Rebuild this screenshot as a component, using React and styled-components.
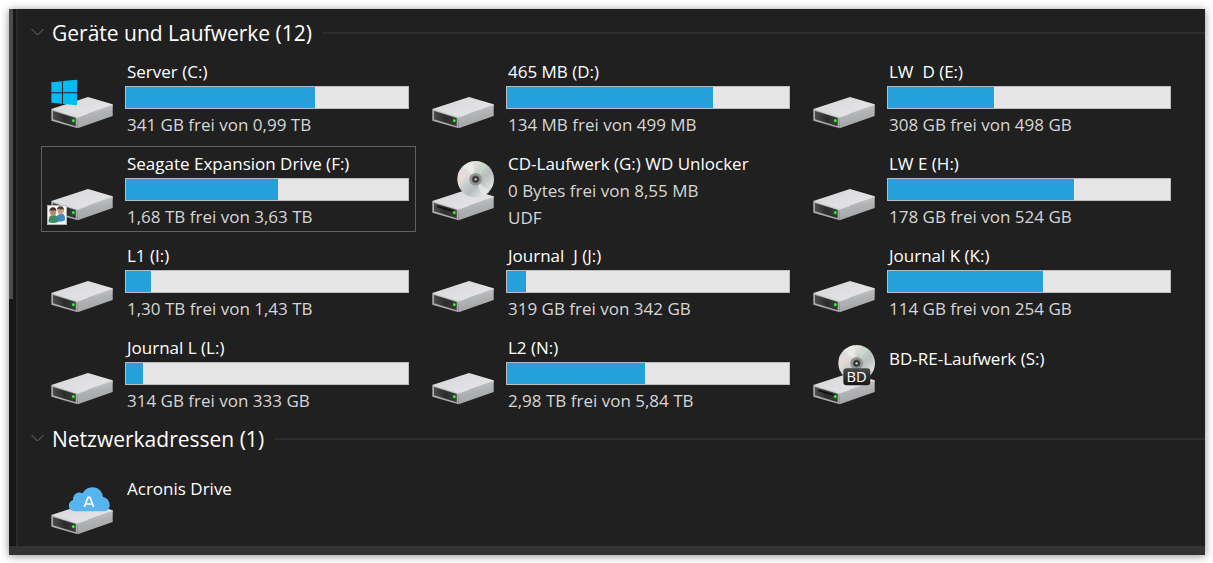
import React, { useState } from "react";
import styled, { createGlobalStyle } from "styled-components";

const GlobalStyle = createGlobalStyle`
  *, *::before, *::after { box-sizing: border-box; }
  body {
    margin: 0;
    background: #fff;
    color: #fff;
    font-family: "Open Sans", "Noto Sans", sans-serif;
    font-size: 17px;
    line-height: 27px;
  }
`;

const Page = styled.div`
  display: flex;
  min-height: 100vh;
  padding: 9px 8px 8px 9px;
`;

const Window = styled.main`
  flex: 1;
  display: flex;
  flex-direction: column;
  background: #202020;
  box-shadow: 0 1px 8px rgba(0, 0, 0, 0.45);
`;

const Panes = styled.div`
  flex: 1;
  display: flex;
`;

const ScrollTrack = styled.div`
  width: 9px;
  background: #171717;
  border-right: 2px solid #2a2a2a;
`;

const ScrollThumb = styled.div`
  width: 4px;
  height: 54%;
  background: #4d4d4d;
`;

const Content = styled.div`
  flex: 1;
  min-width: 0;
  padding-top: 1px;
`;

const StatusBar = styled.footer`
  height: 9px;
  background: #333;
`;

const GroupHeader = styled.h2`
  display: flex;
  align-items: center;
  gap: 11px;
  height: 44px;
  margin: 0;
  padding: 2px 0 0 13px;
  font-weight: 400;

  &::after {
    content: "";
    flex: 1;
    height: 2px;
    background: #2d2d2d;
  }
`;

const GroupToggle = styled.button`
  display: flex;
  align-items: center;
  gap: 8px;
  padding: 0;
  border: 0;
  background: none;
  color: inherit;
  font: inherit;
  font-size: 21px;
  line-height: 30px;
  white-space: nowrap;
`;

const Chevron = styled.svg`
  width: 13px;
  height: 11px;
  fill: none;
  stroke: #6c6c6c;
  transform: ${(p) => (p.$open ? "none" : "rotate(-90deg)")};
`;

const Grid = styled.ul`
  display: grid;
  grid-template-columns: repeat(auto-fill, 375px);
  gap: 6px;
  margin: 0;
  padding: 0 0 0 23px;
  list-style: none;
`;

const Tile = styled.li`
  display: flex;
  gap: 8px;
  height: 86px;
  padding: 0 6px 0 3px;
  border: 1px solid ${(p) => (p.$focused ? "#606060" : "transparent")};
`;

const IconBox = styled.svg`
  flex: none;
  width: 72px;
  height: 80px;
  margin-top: -1px;
`;

const Info = styled.div`
  flex: 1;
  min-width: 0;
  padding-top: ${(p) => (p.$nameOnly ? "14px" : "3px")};
  white-space: pre;
`;

const Name = styled.div`
  padding-left: 2px;
`;

const Detail = styled.div`
  padding-left: 2px;
  color: #d6d6d6;
`;

const Meter = styled.div`
  height: 23px;
  margin: 1px 0 2px;
  border: 1px solid #bcbcbc;
  background: #e6e6e6;
`;

const MeterFill = styled.div`
  height: 100%;
  background: #26a0da;
`;

function DriveIcon({ kind }) {
  const disc = kind === "cd" || kind === "bd";
  return (
    <IconBox viewBox="0 0 216 240" aria-hidden="true">
      <defs>
        <linearGradient id="top" x1="0" y1="0" x2="1" y2="1">
          <stop offset="0" stopColor="#d6d6d9" />
          <stop offset="1" stopColor="#e9e9ec" />
        </linearGradient>
        <linearGradient id="side" x1="0" y1="0" x2="0.3" y2="1">
          <stop offset="0" stopColor="#d2d3d5" />
          <stop offset="0.5" stopColor="#b2b3b5" />
          <stop offset="1" stopColor="#a2a3a5" />
        </linearGradient>
        <linearGradient id="face" x1="0" y1="0" x2="1" y2="0">
          <stop offset="0" stopColor="#4c4c4c" />
          <stop offset="0.5" stopColor="#2c2c2c" />
          <stop offset="1" stopColor="#3a3a3a" />
        </linearGradient>
        <linearGradient id="disc" x1="0" y1="0" x2="1" y2="1">
          <stop offset="0" stopColor="#d5dcda" />
          <stop offset="0.3" stopColor="#e4ded9" />
          <stop offset="0.45" stopColor="#c5cdcb" />
          <stop offset="0.6" stopColor="#b8bdbd" />
          <stop offset="0.8" stopColor="#dcdfdf" />
          <stop offset="1" stopColor="#aeb5b3" />
        </linearGradient>
        <linearGradient id="badge" x1="0" y1="0" x2="0" y2="1">
          <stop offset="0" stopColor="#4a4a4a" />
          <stop offset="1" stopColor="#161616" />
        </linearGradient>
      </defs>

      <path d="M19 165 L129 129 L203 151 L203 157 L99 195 Z" fill="url(#top)" />
      <path d="M96 190 L203 152 V186 L98 223 Z" fill="url(#side)" />
      <path d="M19 165 L97 189 L98 223 L19 200 Z" fill="#a9aaac" />
      <path d="M24 171 L92 192 V217 L24 196 Z" fill="url(#face)" />
      <path d="M20 166 L97 190 L128 179" fill="none" stroke="#e8e8ea" strokeWidth="2" />
      {disc && <path d="M33 181 L80 195" stroke="#0c0c0c" strokeWidth="4" />}
      <circle cx="85" cy="200" r="6" fill="#176b17" />
      <circle cx="85" cy="200" r="4" fill="#3df03a" />

      {disc && (
        <g>
          <circle cx="149" cy="100" r="55" fill="url(#disc)" />
          <path d="M149 100 L112 60 A55 55 0 0 1 140 46 Z" fill="#eef1f0" opacity="0.7" />
          <path d="M149 100 L172 51 A55 55 0 0 1 184 58 Z" fill="#b9e6c4" opacity="0.7" />
          <path d="M149 100 L95 86 A55 55 0 0 1 101 73 Z" fill="#ecd3e6" opacity="0.7" />
          <path d="M149 100 L190 137 A55 55 0 0 1 168 151 Z" fill="#eceeee" opacity="0.6" />
          <circle cx="149" cy="100" r="19" fill="#8e9392" />
          <circle cx="149" cy="100" r="14" fill="#6d7170" stroke="#a9adac" strokeWidth="2" />
          <circle cx="149" cy="100" r="9" fill="#2b2b2b" stroke="#4a4a4a" strokeWidth="2" />
          <circle cx="149" cy="100" r="4" fill="#b9bcbb" />
        </g>
      )}
      {kind === "bd" && (
        <g>
          <rect x="109" y="115" width="81" height="51" rx="10" fill="url(#badge)" />
          <text x="149" y="156" textAnchor="middle" fontSize="44" fill="#fff">BD</text>
        </g>
      )}
      {kind === "windows" && (
        <path
          d="M19 85 L51 82 V115 H19 Z M54 81 L96 77 V115 H54 Z M19 118 H51 V149 L19 146 Z M54 118 H96 V154 L54 150 Z"
          fill="#00bcf2"
        />
      )}
      {kind === "shared" && (
        <g>
          <rect x="7" y="178" width="58" height="58" fill="#f4f4f4" stroke="#b5b5b5" strokeWidth="2" />
          <path d="M34 226 Q32 207 44 204 H54 Q61 207 60 223 Q50 229 34 226 Z" fill="#3f8ac6" />
          <ellipse cx="47" cy="194" rx="9" ry="11" fill="#c99f80" />
          <path d="M36 193 Q36 181 47 181 Q57 181 57 194 L53 189 Q45 192 40 188 Z" fill="#4a3b31" />
          <path d="M11 229 Q10 211 20 208 H31 Q40 211 40 227 Q28 234 11 229 Z" fill="#3c8d63" />
          <ellipse cx="24" cy="198" rx="9" ry="12" fill="#b98a69" />
          <path d="M13 198 Q13 184 24 184 Q34 184 34 197 L30 192 Q22 195 17 192 Z" fill="#3d3029" />
        </g>
      )}
      {kind === "cloud" && (
        <g>
          <path
            d="M89 154 C66 152 67 125 84 120 C83 101 101 93 113 100 C125 73 170 75 174 111 C200 116 200 152 178 154 Z"
            fill="#57b4ef"
          />
          <path
            d="M118 141 L129 112 H135 L146 141 M123 132 H141"
            fill="none"
            stroke="#fff"
            strokeWidth="5"
            strokeLinejoin="round"
          />
        </g>
      )}
    </IconBox>
  );
}

function Drive({ name, details = [], used, kind, focused }) {
  const hasMeter = used !== undefined;
  return (
    <Tile $focused={focused}>
      <DriveIcon kind={kind} />
      <Info $nameOnly={details.length === 0}>
        <Name>{name}</Name>
        {hasMeter && (
          <Meter role="meter" aria-label={name} aria-valuemin={0} aria-valuemax={100} aria-valuenow={used}>
            <MeterFill style={{ width: `${used}%` }} />
          </Meter>
        )}
        {details.map((line) => (
          <Detail key={line}>{line}</Detail>
        ))}
      </Info>
    </Tile>
  );
}

function Group({ title, drives }) {
  const [open, setOpen] = useState(true);
  return (
    <section>
      <GroupHeader>
        <GroupToggle type="button" aria-expanded={open} onClick={() => setOpen(!open)}>
          <Chevron viewBox="0 0 13 11" $open={open} aria-hidden="true">
            <path d="M0.5 1 L6.5 7 L12.5 1" />
          </Chevron>
          {title} ({drives.length})
        </GroupToggle>
      </GroupHeader>
      {open && (
        <Grid>
          {drives.map((drive) => (
            <Drive key={drive.name} {...drive} />
          ))}
        </Grid>
      )}
    </section>
  );
}

const devices = [
  { name: "Server (C:)", details: ["341 GB frei von 0,99 TB"], used: 67, kind: "windows" },
  { name: "465 MB (D:)", details: ["134 MB frei von 499 MB"], used: 73 },
  { name: "LW  D (E:)", details: ["308 GB frei von 498 GB"], used: 37.6 },
  { name: "Seagate Expansion Drive (F:)", details: ["1,68 TB frei von 3,63 TB"], used: 53.9, kind: "shared", focused: true },
  { name: "CD-Laufwerk (G:) WD Unlocker", details: ["0 Bytes frei von 8,55 MB", "UDF"], kind: "cd" },
  { name: "LW E (H:)", details: ["178 GB frei von 524 GB"], used: 66 },
  { name: "L1 (I:)", details: ["1,30 TB frei von 1,43 TB"], used: 9 },
  { name: "Journal  J (J:)", details: ["319 GB frei von 342 GB"], used: 6.7 },
  { name: "Journal K (K:)", details: ["114 GB frei von 254 GB"], used: 55 },
  { name: "Journal L (L:)", details: ["314 GB frei von 333 GB"], used: 6 },
  { name: "L2 (N:)", details: ["2,98 TB frei von 5,84 TB"], used: 49 },
  { name: "BD-RE-Laufwerk (S:)", kind: "bd" },
];

const network = [{ name: "Acronis Drive", kind: "cloud" }];

export default function App() {
  return (
    <Page>
      <GlobalStyle />
      <Window>
        <Panes>
          <ScrollTrack>
            <ScrollThumb />
          </ScrollTrack>
          <Content>
            <Group title="Geräte und Laufwerke" drives={devices} />
            <Group title="Netzwerkadressen" drives={network} />
          </Content>
        </Panes>
        <StatusBar />
      </Window>
    </Page>
  );
}
